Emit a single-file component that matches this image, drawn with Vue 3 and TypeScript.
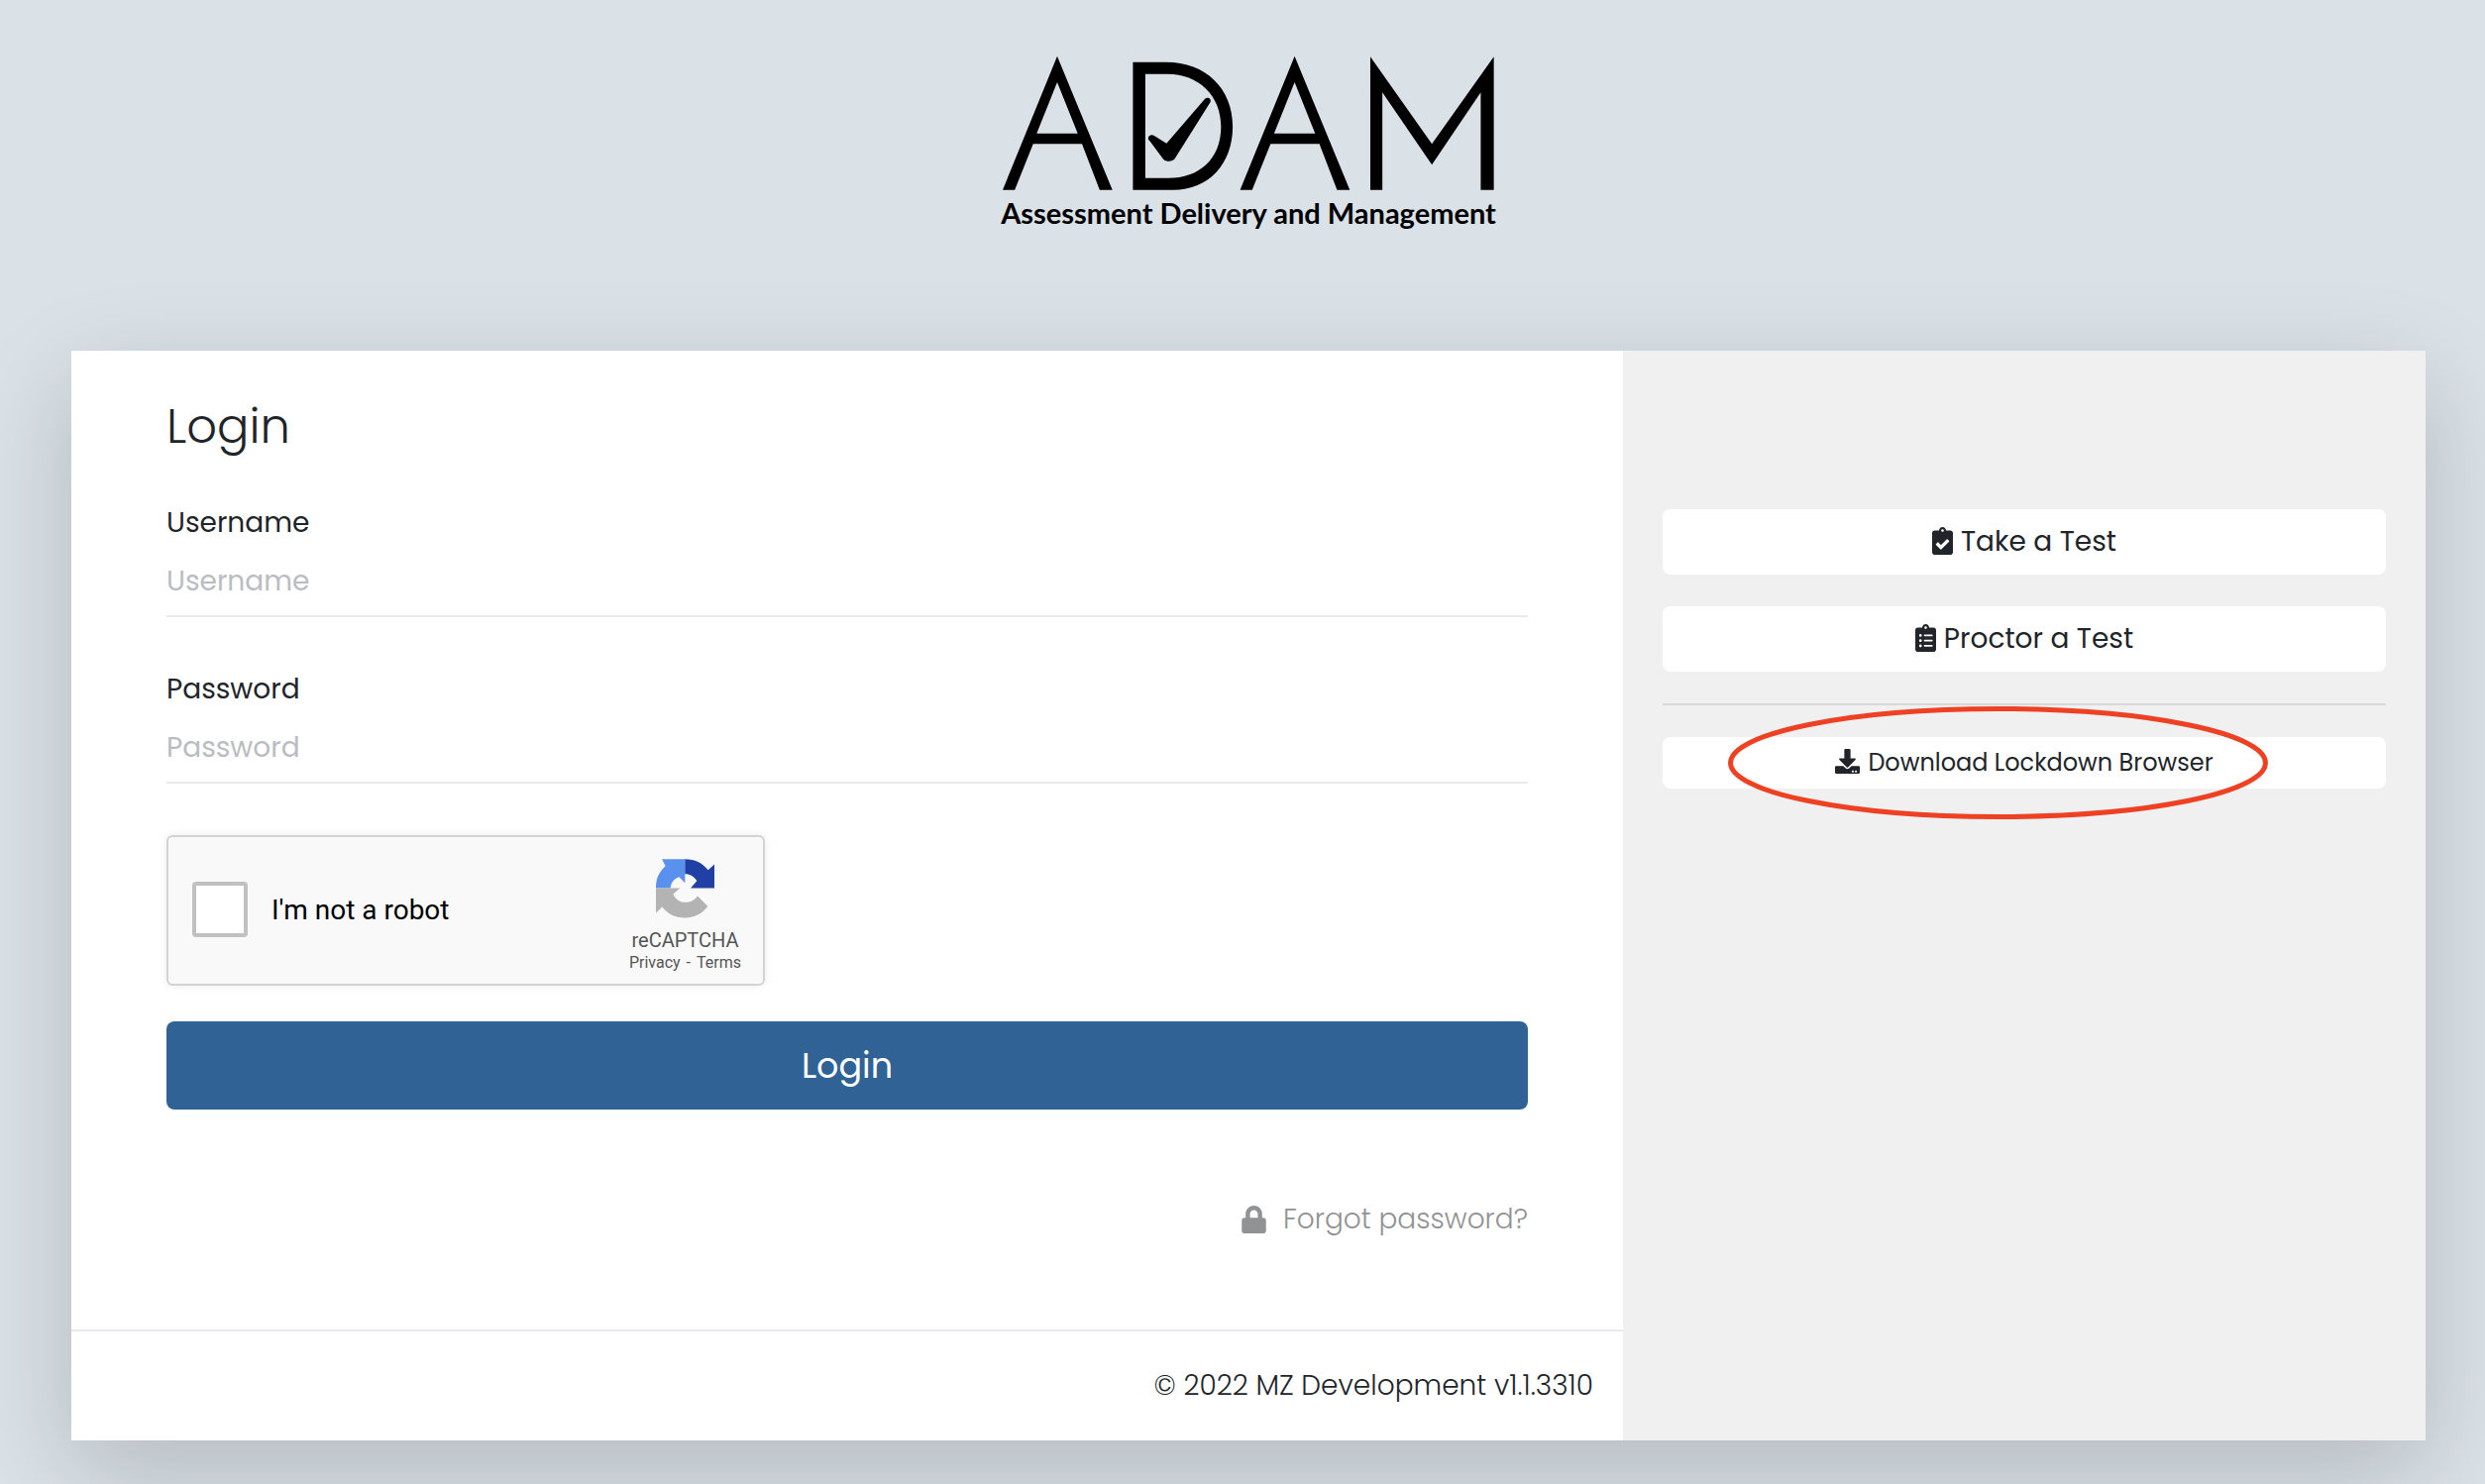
<script setup lang="ts">
import { ref } from 'vue'

const username = ref('')
const password = ref('')
const notRobot = ref(false)
</script>

<template>
  <div class="page">
    <header class="brand">
      <svg class="logo" viewBox="88 50 1389 408" preserveAspectRatio="none" role="img" aria-label="ADAM">
        <path fill-rule="evenodd" d="M242 52L398 457H362L312 318H174L122 457H88ZM242 131L300 286H184Z" />
        <path fill-rule="evenodd" d="M456 70H550C662 70 738 150 738 265C738 378 670 457 570 457H456ZM491 106V421H557C642 421 705 365 705 265C705 170 640 106 555 106Z" />
        <path d="M499 301C499 291 510 288 516 293L551 316L659 182C666 174 679 180 675 191L576 360C571 372 551 374 542 364L503 308C500 305 499 303 499 301Z" />
        <path fill-rule="evenodd" d="M913 52L1069 457H1033L983 318H845L793 457H759ZM913 131L971 286H855Z" />
        <path d="M1127 54L1301 318L1476 54V457H1439V162L1301 381L1161 162V457H1127Z" />
      </svg>
      <p class="tagline">Assessment Delivery and Management</p>
    </header>

    <main class="card">
      <section class="main">
        <form class="form" @submit.prevent>
          <h1>Login</h1>
          <div class="field">
            <label for="username">Username</label>
            <input id="username" v-model="username" type="text" placeholder="Username" />
          </div>
          <div class="field">
            <label for="password">Password</label>
            <input id="password" v-model="password" type="password" placeholder="Password" />
          </div>

          <div class="captcha">
            <input id="robot" v-model="notRobot" type="checkbox" />
            <label for="robot">I'm not a robot</label>
            <div class="captcha-brand">
              <svg class="captcha-logo" viewBox="128 50 177 185" aria-hidden="true">
                <path fill="#5b91ee" d="M146 53H216V125L198 107C183 112 173 124 172 141H128C128 112 137 92 157 74Z" />
                <path fill="#2140a5" d="M216 53C246 53 268 64 286 86L305 69V141H233L252 119C243 105 232 98 216 98Z" />
                <path fill="#b3b3b3" d="M128 141H201L180 159C186 174 200 184 216 184C233 184 245 177 254 165L285 196C268 220 243 231 216 231C187 231 164 220 147 198L128 216Z" />
              </svg>
              <span class="captcha-name">reCAPTCHA</span>
              <span class="captcha-links">
                <a href="#privacy">Privacy</a>
                <span>-</span>
                <a href="#terms">Terms</a>
              </span>
            </div>
          </div>

          <button class="submit" type="submit">Login</button>
          <a class="forgot" href="#forgot">
            <svg viewBox="0 0 448 512" aria-hidden="true">
              <path d="M400 224h-24v-72C376 68.200 307.800 0 224 0S72 68.200 72 152v72H48c-26.500 0-48 21.500-48 48v192c0 26.500 21.500 48 48 48h352c26.500 0 48-21.500 48-48V272c0-26.500-21.500-48-48-48zm-104 0H152v-72c0-39.700 32.300-72 72-72s72 32.300 72 72v72z" />
            </svg>
            <span>Forgot password?</span>
          </a>
        </form>
        <footer>© 2022 MZ Development v1.1.3310</footer>
      </section>

      <aside class="side">
        <button type="button">
          <svg viewBox="0 0 384 512" aria-hidden="true">
            <path d="M336 64h-80c0-35.300-28.700-64-64-64s-64 28.700-64 64H48C21.500 64 0 85.500 0 112v352c0 26.500 21.500 48 48 48h288c26.500 0 48-21.500 48-48V112c0-26.500-21.500-48-48-48zM192 40c13.300 0 24 10.700 24 24s-10.700 24-24 24-24-10.700-24-24 10.700-24 24-24zm121.200 231.800l-143 141.800c-4.700 4.700-12.300 4.600-17-.1l-82.600-83.300c-4.700-4.700-4.600-12.300.1-17L99.100 285c4.700-4.700 12.300-4.600 17 .1l46 46.400 106-105.200c4.700-4.700 12.300-4.600 17 .1l28.200 28.400c4.700 4.800 4.600 12.300-.1 17z" />
          </svg>
          <span>Take a Test</span>
        </button>
        <button type="button">
          <svg viewBox="0 0 384 512" aria-hidden="true">
            <path d="M336 64h-80c0-35.300-28.700-64-64-64s-64 28.700-64 64H48C21.500 64 0 85.500 0 112v352c0 26.500 21.500 48 48 48h288c26.500 0 48-21.500 48-48V112c0-26.500-21.500-48-48-48zM96 424c-13.300 0-24-10.700-24-24s10.700-24 24-24 24 10.700 24 24-10.700 24-24 24zm0-96c-13.300 0-24-10.700-24-24s10.700-24 24-24 24 10.700 24 24-10.700 24-24 24zm0-96c-13.300 0-24-10.700-24-24s10.700-24 24-24 24 10.700 24 24-10.700 24-24 24zm96-192c13.300 0 24 10.700 24 24s-10.700 24-24 24-24-10.700-24-24 10.700-24 24-24zm128 368c0 4.400-3.600 8-8 8H168c-4.400 0-8-3.600-8-8v-16c0-4.400 3.600-8 8-8h144c4.400 0 8 3.600 8 8v16zm0-96c0 4.400-3.600 8-8 8H168c-4.400 0-8-3.600-8-8v-16c0-4.400 3.600-8 8-8h144c4.400 0 8 3.600 8 8v16zm0-96c0 4.400-3.600 8-8 8H168c-4.400 0-8-3.600-8-8v-16c0-4.400 3.600-8 8-8h144c4.400 0 8 3.600 8 8v16z" />
          </svg>
          <span>Proctor a Test</span>
        </button>
        <hr />
        <div class="download">
          <button class="small" type="button">
            <svg viewBox="0 0 512 512" aria-hidden="true">
              <path d="M216 0h80c13.300 0 24 10.700 24 24v168h87.700c17.800 0 26.700 21.500 14.100 34.100L269.700 378.300c-7.500 7.500-19.800 7.500-27.300 0L90.100 226.100c-12.600-12.600-3.700-34.100 14.100-34.100H192V24c0-13.300 10.700-24 24-24zm296 376v112c0 13.300-10.700 24-24 24H24c-13.300 0-24-10.700-24-24V376c0-13.300 10.700-24 24-24h146.700l49 49c20.100 20.100 52.500 20.100 72.600 0l49-49H488c13.300 0 24 10.700 24 24zm-124 88c0-11-9-20-20-20s-20 9-20 20 9 20 20 20 20-9 20-20zm64 0c0-11-9-20-20-20s-20 9-20 20 9 20 20 20 20-9 20-20z" />
            </svg>
            <span>Download Lockdown Browser</span>
          </button>
          <svg class="highlight" viewBox="0 0 545 114" aria-hidden="true">
            <ellipse cx="272.5" cy="57" rx="270" ry="54.500" fill="none" stroke="#ee4023" stroke-width="5" />
          </svg>
        </div>
      </aside>
    </main>
  </div>
</template>

<style>
body {
  margin: 0;
  background: #dae1e7;
}
</style>

<style scoped>
* {
  box-sizing: border-box;
}
.page {
  min-height: 100vh;
  padding: 56px 60px 44px 72px;
  overflow: hidden;
  background: #dae1e7;
  color: #212529;
  font-family: Poppins, Inter, sans-serif;
  font-size: 28px;
  line-height: 42px;
}
.brand {
  display: flex;
  flex-direction: column;
  align-items: center;
  margin-bottom: 118px;
  color: #000;
}
.logo {
  width: 496px;
  height: 136px;
}
.tagline {
  margin: 2px 0 0;
  font: 700 29px/42px Lato, sans-serif;
}
.card {
  display: grid;
  grid-template-columns: 1566fr 810fr;
  background: #fff;
  box-shadow: 0 32px 96px rgba(0, 0, 0, 0.175);
}
.form {
  display: flex;
  flex-direction: column;
  padding: 45px 96px 90px;
}
h1 {
  margin: 0 0 44px;
  font-size: 48px;
  font-weight: 300;
  line-height: 64px;
}
.field {
  display: flex;
  flex-direction: column;
  margin-bottom: 52px;
}
.field input {
  width: 100%;
  height: 74px;
  padding: 4px 0 0;
  border: 0;
  border-bottom: 2px solid #e9eaf0;
  background: transparent;
  color: inherit;
  font: inherit;
}
.field input::placeholder {
  color: #b9bdc2;
  opacity: 1;
}
.captcha {
  display: flex;
  align-items: center;
  width: 604px;
  height: 152px;
  margin: 0 0 36px;
  padding: 0 22px 0 24px;
  border: 2px solid #d3d3d3;
  border-radius: 6px;
  background: #f9f9f9;
  box-shadow: 0 0 8px rgba(0, 0, 0, 0.08);
  color: #000;
  font-family: Roboto, sans-serif;
}
.captcha input {
  width: 56px;
  height: 56px;
  margin: 0 24px 2px 0;
  border: 4px solid #c1c1c1;
  border-radius: 4px;
  background: #fff;
  appearance: none;
}
.captcha-brand {
  display: flex;
  flex-direction: column;
  align-items: center;
  margin-left: auto;
  padding-top: 10px;
  color: #555;
}
.captcha-logo {
  width: 59px;
  height: 62px;
  margin-bottom: 8px;
}
.captcha-name {
  font-size: 20px;
  line-height: 26px;
}
.captcha-links {
  display: flex;
  gap: 6px;
  font-size: 16px;
  line-height: 20px;
}
.captcha-links a {
  color: inherit;
  text-decoration: none;
}
.submit {
  height: 89px;
  border: 0;
  border-radius: 8px;
  background: #306295;
  color: #fff;
  font: inherit;
  font-size: 35px;
}
.forgot {
  display: flex;
  align-items: center;
  align-self: flex-end;
  gap: 17px;
  margin-top: 90px;
  color: #919293;
  font-weight: 300;
  text-decoration: none;
}
.forgot svg {
  width: 25px;
  height: 28px;
}
svg {
  flex: none;
  fill: currentColor;
}
footer {
  padding: 34px 30px;
  border-top: 2px solid #e6eaee;
  font-weight: 300;
  text-align: right;
}
.side {
  display: flex;
  flex-direction: column;
  gap: 32px;
  padding: 160px 40px 0;
  background: #f0f0f0;
}
.side button {
  display: flex;
  align-items: center;
  justify-content: center;
  gap: 8px;
  width: 100%;
  height: 66px;
  padding: 0;
  border: 0;
  border-radius: 8px;
  background: #fff;
  color: inherit;
  font: inherit;
}
.side button svg {
  width: 21px;
  height: 28px;
  margin-bottom: 3px;
}
hr {
  width: 100%;
  height: 2px;
  margin: 0;
  border: 0;
  background: #d8d8d8;
}
.download {
  position: relative;
}
.side .small {
  height: 52px;
  font-size: 24px;
}
.side .small svg {
  width: 25px;
  height: 25px;
}
.highlight {
  position: absolute;
  top: -31px;
  left: 9%;
  width: 545px;
  height: 114px;
  pointer-events: none;
}
</style>
